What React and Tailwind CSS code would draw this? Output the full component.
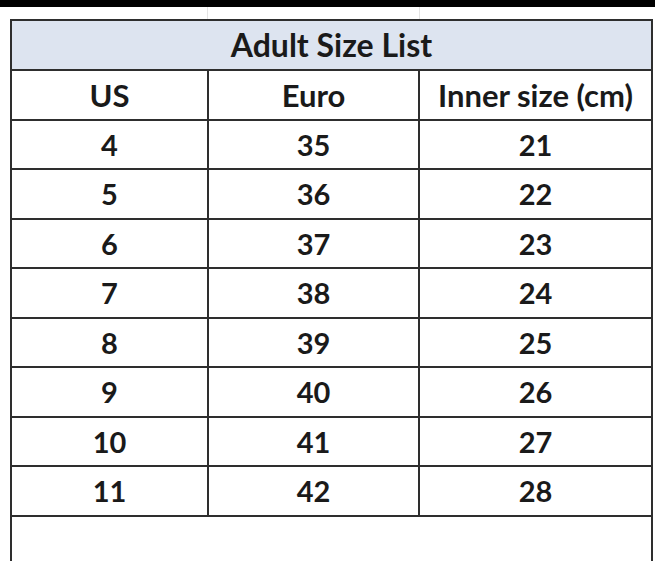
import React from 'react';

const ROWS = [
    ['4', '35', '21'],
    ['5', '36', '22'],
    ['6', '37', '23'],
    ['7', '38', '24'],
    ['8', '39', '25'],
    ['9', '40', '26'],
    ['10', '41', '27'],
    ['11', '42', '28'],
];

const Row = ({ cells, className = '' }) => (
    <div className={`grid grid-cols-[197px_211px_231px] h-[49.5px] border-b-2 border-[#2e2e2e] ${className}`}>
        {cells.map((c, i) => (
            <div
                key={i}
                className={`flex items-center justify-center ${i < 2 ? 'border-r-2 border-[#2e2e2e]' : ''}`}
            >
                {c}
            </div>
        ))}
    </div>
);

const App = () => {
    return (
        <div
            className="w-[655px] h-[561px] bg-white overflow-hidden text-[#1a1a1a] font-bold"
            style={{ fontFamily: 'Lato, "Open Sans", sans-serif' }}
        >
            <div className="h-[7px] bg-black" />
            {/* faint spreadsheet gridlines above the table */}
            <div className="h-[12px] flex">
                <div className="w-[208px] border-r border-[#e4e4e4]" />
                <div className="w-[212px] border-r border-[#e4e4e4]" />
            </div>
            <div className="flex">
                <div className="w-[10px]" />
                <div className="w-[643px] border-2 border-[#2e2e2e] border-b-0">
                    <div className="h-[50px] bg-[#dde4f0] border-b-2 border-[#2e2e2e] flex items-center justify-center text-[32px]">
                        Adult Size List
                    </div>
                    <Row cells={['US', 'Euro', 'Inner size (cm)']} className="text-[31px]" />
                    {ROWS.map((r) => (
                        <Row key={r[0]} cells={r} className="text-[29px]" />
                    ))}
                    <div className="h-[60px]" />
                </div>
            </div>
        </div>
    );
};

export default App;
